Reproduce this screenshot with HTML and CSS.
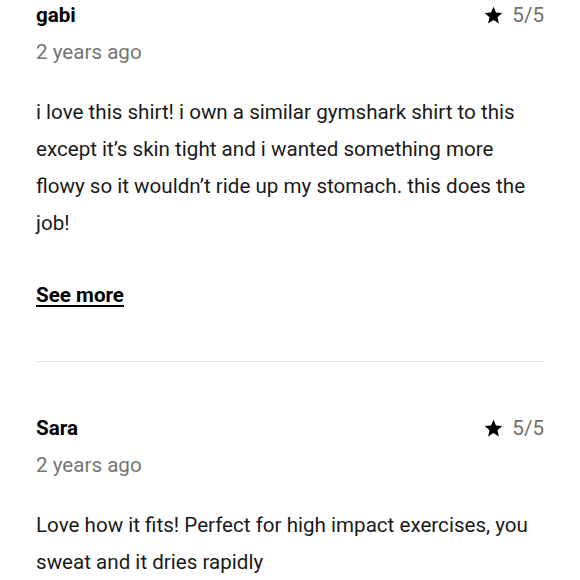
FILE: index.html
```html
<!DOCTYPE html>
<html>
<head>
<meta charset="utf-8">
<link rel="stylesheet" href="styles.css">
</head>
<body>
<div class="reviews">
  <div class="review">
    <div class="head">
      <div class="name">gabi</div>
      <div class="rating">
        <svg class="star" viewBox="0 0 24 24"><path d="M12 17.27L18.18 21l-1.64-7.03L22 9.24l-7.19-.61L12 2 9.19 8.63 2 9.24l5.46 4.73L5.82 21z"/></svg>
        <span>5/5</span>
      </div>
    </div>
    <div class="date">2 years ago</div>
    <p class="text">i love this shirt! i own a similar gymshark shirt to this except it’s skin tight and i wanted something more flowy so it wouldn’t ride up my stomach. this does the job!</p>
    <a class="more" href="#">See more</a>
  </div>
  <div class="review">
    <div class="head">
      <div class="name">Sara</div>
      <div class="rating">
        <svg class="star" viewBox="0 0 24 24"><path d="M12 17.27L18.18 21l-1.64-7.03L22 9.24l-7.19-.61L12 2 9.19 8.63 2 9.24l5.46 4.73L5.82 21z"/></svg>
        <span>5/5</span>
      </div>
    </div>
    <div class="date">2 years ago</div>
    <p class="text">Love how it fits! Perfect for high impact exercises, you sweat and it dries rapidly</p>
  </div>
</div>
</body>
</html>
```
FILE: styles.css
```css
html, body {
  margin: 0;
  padding: 0;
  background: #fff;
}
body {
  font-family: Roboto, "Liberation Sans", sans-serif;
  color: #1a1a1a;
}
.reviews {
  margin: -3px 36px 0 36px;
}
.review {
  padding-bottom: 47px;
  border-bottom: 1px solid #e0e0e0;
  margin-bottom: 48px;
}
.review:last-child {
  border-bottom: none;
}
.head {
  display: flex;
  justify-content: space-between;
  align-items: center;
  line-height: 37px;
  height: 37px;
}
.name {
  font-size: 20.6px;
  font-weight: 700;
  color: #000;
}
.rating {
  display: flex;
  align-items: center;
  gap: 8px;
  font-size: 20.6px;
  color: #6f6f6f;
}
.star {
  width: 21px;
  height: 21px;
  fill: #000;
}
.date {
  font-size: 20.6px;
  line-height: 37px;
  color: #757575;
}
.text {
  margin: 23px 0 0 0;
  font-size: 20.6px;
  line-height: 37px;
  color: #1a1a1a;
}
.more {
  display: block;
  margin-top: 35px;
  font-size: 20.6px;
  line-height: 37px;
  font-weight: 700;
  color: #000;
  text-decoration: underline;
  text-underline-offset: 3px;
}
```
